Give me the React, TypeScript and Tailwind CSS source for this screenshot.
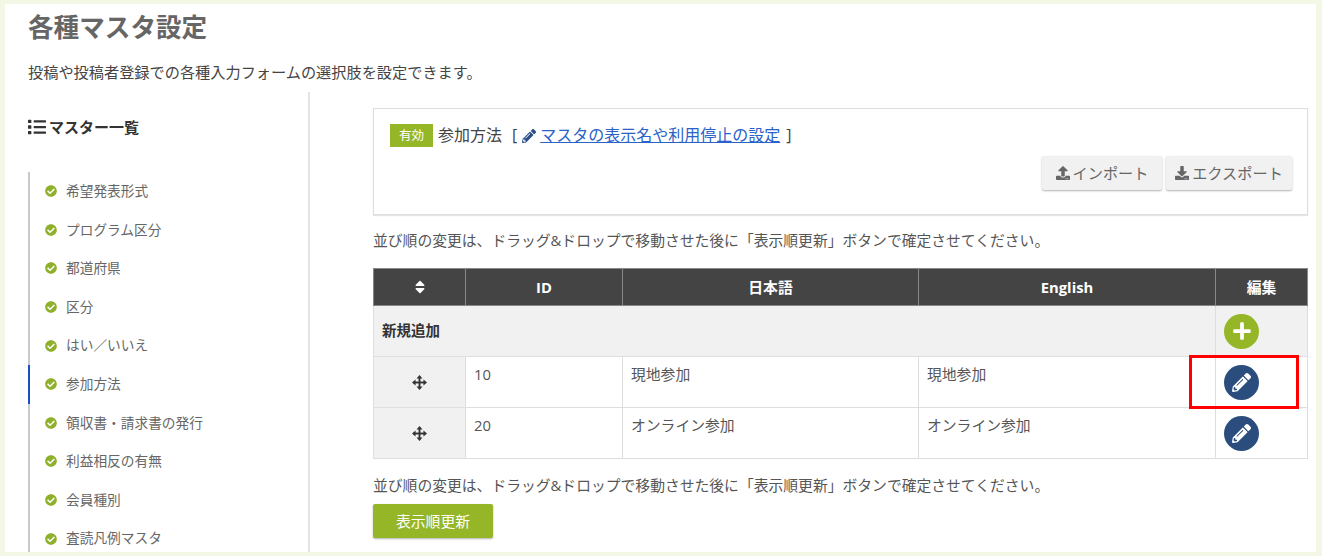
import {
	FaCheckCircle,
	FaDownload,
	FaList,
	FaPencilAlt,
	FaPlus,
	FaSort,
	FaUpload,
} from "react-icons/fa";

const MASTERS = [
	"希望発表形式",
	"プログラム区分",
	"都道府県",
	"区分",
	"はい／いいえ",
	"参加方法",
	"領収書・請求書の発行",
	"利益相反の有無",
	"会員種別",
	"査読凡例マスタ",
];

const ROWS = [
	{ id: "10", ja: "現地参加", en: "現地参加" },
	{ id: "20", ja: "オンライン参加", en: "オンライン参加" },
];

const NOTE =
	"並び順の変更は、ドラッグ&ドロップで移動させた後に「表示順更新」ボタンで確定させてください。";

function MoveIcon() {
	return (
		<svg viewBox="0 0 16 16" className="mx-auto size-[15px]" fill="#333">
			<path d="M7 3h2v10H7z" />
			<path d="M3 7h10v2H3z" />
			<path d="M8 0l3.2 3.8H4.8zM8 16l-3.2-3.8h6.4zM0 8l3.8-3.2v6.4zM16 8l-3.8 3.2V4.8z" />
		</svg>
	);
}

function Sidebar() {
	return (
		<aside className="w-[282px] shrink-0 border-r-2 border-[#e4e4e4] h-[470px]">
			<h2 className="mt-[23px] flex items-center gap-[3px] text-[15px] leading-[24px] font-bold text-[#333]">
				<FaList className="size-[18px]" />
				マスター一覧
			</h2>
			<ul className="mt-[33px] border-l-2 border-[#c9c9c9]">
				{MASTERS.map((name) => (
					<li
						key={name}
						className={`-ml-[2px] flex h-[38.6px] items-center gap-[9px] border-l-2 pl-[15px] text-[13.7px] text-[#666] ${
							name === "参加方法" ? "border-[#1a4fc0]" : "border-transparent"
						}`}
					>
						<FaCheckCircle className="size-[12px] text-[#8fb02b]" />
						{name}
					</li>
				))}
			</ul>
		</aside>
	);
}

function MasterBox() {
	return (
		<section className="h-[107px] border border-[#dedede] shadow-[0_1px_1px_rgba(0,0,0,0.1)] pt-[15px] pl-[16px] pr-[15px]">
			<div className="flex items-center text-[16px] leading-[23px] text-[#444]">
				<span className="mr-[5px] flex h-[23px] w-[43px] items-center justify-center bg-[#95b627] text-[12.5px] text-white">
					有効
				</span>
				参加方法
				<span className="ml-[10px]">[</span>
				<FaPencilAlt className="ml-[5px] mr-[4px] size-[14px] text-[#2b4f86]" />
				<a href="#" className="text-[#2a62c9] underline">
					マスタの表示名や利用停止の設定
				</a>
				<span className="ml-[6px]">]</span>
			</div>
			<div className="mt-[9px] flex justify-end gap-[4px]">
				<button
					type="button"
					className="flex h-[34px] w-[120px] items-center justify-center gap-[3px] rounded-[2px] bg-[#f1f1f1] text-[15.2px] text-[#666] shadow-[0_1px_2px_rgba(0,0,0,0.3)]"
				>
					<FaUpload className="size-[14px]" />
					インポート
				</button>
				<button
					type="button"
					className="flex h-[34px] w-[126px] items-center justify-center gap-[3px] rounded-[2px] bg-[#f1f1f1] text-[15.2px] text-[#666] shadow-[0_1px_2px_rgba(0,0,0,0.3)]"
				>
					<FaDownload className="size-[14px]" />
					エクスポート
				</button>
			</div>
		</section>
	);
}

function RoundButton({ kind }: { kind: "add" | "edit" }) {
	return (
		<button
			type="button"
			className={`flex size-[35px] items-center justify-center rounded-full text-white ${
				kind === "add" ? "bg-[#95b627]" : "bg-[#2b4d7e]"
			}`}
		>
			{kind === "add" ? (
				<FaPlus className="size-[20px]" />
			) : (
				<FaPencilAlt className="size-[19px]" />
			)}
		</button>
	);
}

function MasterTable() {
	const cell = "border border-[#dedede] align-top px-[8px] pt-[6px]";
	const head = "border border-[#888] bg-[#444] text-[14.8px] font-bold text-white";
	return (
		<table className="w-[934px] table-fixed border-collapse text-[14.8px] text-[#555]">
			<colgroup>
				<col className="w-[92px]" />
				<col className="w-[157px]" />
				<col className="w-[296px]" />
				<col className="w-[297px]" />
				<col className="w-[92px]" />
			</colgroup>
			<thead>
				<tr className="h-[37px]">
					<th className={head}>
						<FaSort className="mx-auto size-[16px]" />
					</th>
					<th className={head}>ID</th>
					<th className={head}>日本語</th>
					<th className={head}>English</th>
					<th className={head}>編集</th>
				</tr>
			</thead>
			<tbody>
				<tr className="h-[51px] bg-[#f1f1f1]">
					<td colSpan={4} className="border border-[#dedede] px-[8px] text-[14.5px] font-bold text-[#333]">
						新規追加
					</td>
					<td className="border border-[#dedede] px-[8px]">
						<RoundButton kind="add" />
					</td>
				</tr>
				{ROWS.map((row) => (
					<tr key={row.id} className="h-[51px]">
						<td className="border border-[#dedede] bg-[#f1f1f1]">
							<MoveIcon />
						</td>
						<td className={cell}>{row.id}</td>
						<td className={cell}>{row.ja}</td>
						<td className={cell}>{row.en}</td>
						<td className="border border-[#dedede] px-[8px]">
							<RoundButton kind="edit" />
						</td>
					</tr>
				))}
			</tbody>
		</table>
	);
}

export default function App() {
	return (
		<div
			className="relative h-[556px] w-[1322px] overflow-hidden bg-[#f3f8e6] pt-[4px] pl-[5px]"
			style={{ fontFamily: '"Open Sans", "Noto Sans CJK JP", sans-serif' }}
		>
			<main className="h-[548px] w-[1311px] overflow-hidden bg-white pl-[23px]">
				<h1 className="mt-[8px] text-[25.6px] leading-[32px] font-bold text-[#666]">
					各種マスタ設定
				</h1>
				<p className="mt-[16px] text-[15.2px] leading-[24px] text-[#444]">
					投稿や投稿者登録での各種入力フォームの選択肢を設定できます。
				</p>
				<div className="mt-[8px] flex">
					<Sidebar />
					<div className="ml-[63px] pt-[16px]">
						<MasterBox />
						<p className="mt-[14px] text-[14.8px] leading-[22px] text-[#555]">{NOTE}</p>
						<div className="mt-[17px]">
							<MasterTable />
						</div>
						<p className="mt-[15px] text-[14.8px] leading-[22px] text-[#555]">{NOTE}</p>
						<button
							type="button"
							className="mt-[8px] h-[34px] w-[120px] rounded-[2px] bg-[#95b627] text-[14.8px] text-white shadow-[0_1px_2px_rgba(0,0,0,0.3)]"
						>
							表示順更新
						</button>
					</div>
				</div>
			</main>
			{/* Red callout */}
			<div className="absolute top-[355px] left-[1189px] h-[54px] w-[110px] border-[3px] border-[#f00]" />
		</div>
	);
}
